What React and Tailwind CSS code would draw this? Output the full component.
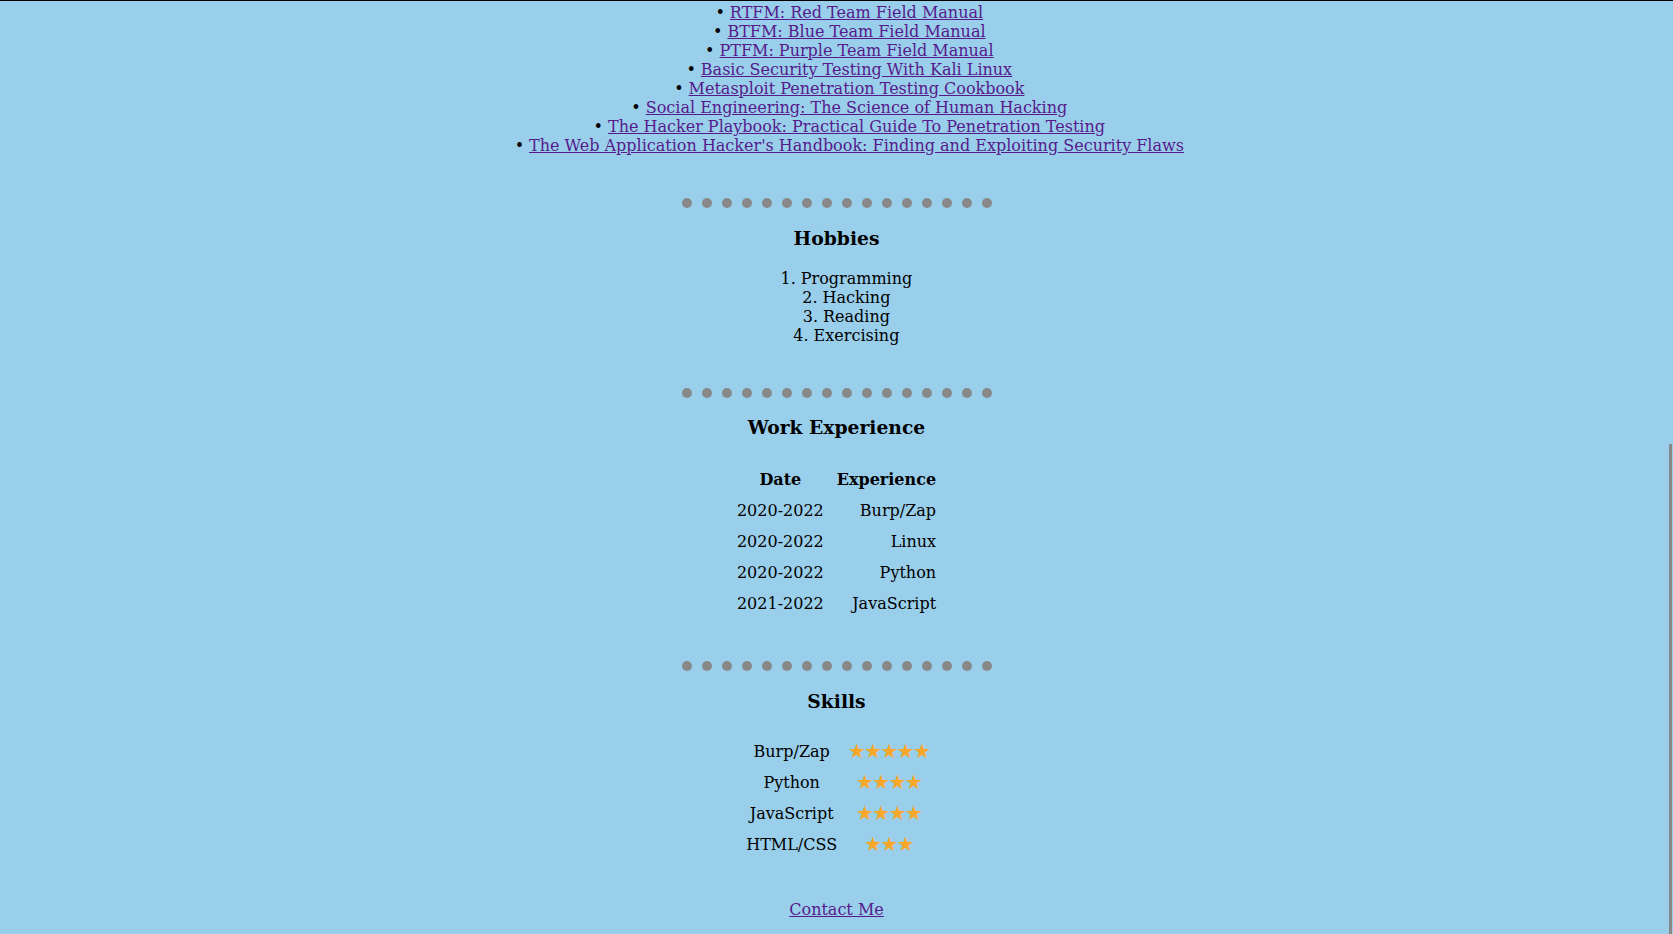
const books = [
  'RTFM: Red Team Field Manual',
  'BTFM: Blue Team Field Manual',
  'PTFM: Purple Team Field Manual',
  'Basic Security Testing With Kali Linux',
  'Metasploit Penetration Testing Cookbook',
  'Social Engineering: The Science of Human Hacking',
  'The Hacker Playbook: Practical Guide To Penetration Testing',
  "The Web Application Hacker's Handbook: Finding and Exploiting Security Flaws",
];

const hobbies = ['Programming', 'Hacking', 'Reading', 'Exercising'];

const work = [
  ['2020-2022', 'Burp/Zap'],
  ['2020-2022', 'Linux'],
  ['2020-2022', 'Python'],
  ['2021-2022', 'JavaScript'],
];

const skills = [
  ['Burp/Zap', 5],
  ['Python', 4],
  ['JavaScript', 4],
  ['HTML/CSS', 3],
];

function Dots({ className = 'mt-[43px]' }) {
  return (
    <div className={`flex justify-center gap-[10px] ${className}`}>
      {Array.from({ length: 16 }).map((_, i) => (
        <span key={i} className="w-[10px] h-[10px] rounded-full bg-[#888888]" />
      ))}
    </div>
  );
}

// marker sits just left of the centred text, like an outside list marker
function Item({ marker, children }) {
  return (
    <li>
      <span className="relative">
        <span className="absolute right-full pr-[5px] whitespace-nowrap">{marker}</span>
        {children}
      </span>
    </li>
  );
}

export default function App() {
  return (
    <div className="relative min-h-[934px] bg-[#9acfeb] text-black text-center text-[16px] leading-[normal] font-['DejaVu_Serif',serif]">
      <div className="h-px bg-black" />

      {/* reading list */}
      <ul className="pl-10 pt-[2px]">
        {books.map((b, i) => (
          <Item key={i} marker="•">
            <a href="#" className="text-[#551a8b] underline">{b}</a>
          </Item>
        ))}
      </ul>

      <Dots />
      <h3 className="mt-[19px] text-[18.72px] font-bold">Hobbies</h3>
      <ol className="pl-10 mt-[20px]">
        {hobbies.map((h, i) => (
          <Item key={i} marker={`${i + 1}.`}>{h}</Item>
        ))}
      </ol>

      <Dots />
      <h3 className="mt-[18px] text-[18.72px] font-bold">Work Experience</h3>
      <table className="mx-auto mt-[26px]">
        <thead>
          <tr>
            <th className="px-[6.5px] py-[6px] text-center">Date</th>
            <th className="px-[6.5px] py-[6px] text-right">Experience</th>
          </tr>
        </thead>
        <tbody>
          {work.map(([d, e], i) => (
            <tr key={i}>
              <td className="px-[6.5px] py-[6px] text-center">{d}</td>
              <td className="px-[6.5px] py-[6px] text-right">{e}</td>
            </tr>
          ))}
        </tbody>
      </table>

      <Dots className="mt-[42px]" />
      <h3 className="mt-[19px] text-[18.72px] font-bold">Skills</h3>
      <table className="mx-auto mt-[24px]">
        <tbody>
          {skills.map(([s, n], i) => (
            <tr key={i}>
              <td className="pl-[9px] pr-[4px] py-[6px] text-center">{s}</td>
              <td className="px-[6.5px] py-[6px] text-center text-[#f7a72a] text-[20px] tracking-[-1.6px] leading-[19px] font-['DejaVu_Sans',sans-serif]">
                {'★'.repeat(n)}
              </td>
            </tr>
          ))}
        </tbody>
      </table>

      <p className="mt-[40px] pb-[15px]">
        <a href="#" className="text-[#551a8b] underline">Contact Me</a>
      </p>

      {/* overlay scrollbar thumb */}
      <div className="absolute right-[1px] top-[444px] w-[3px] h-[490px] bg-[#888888]" />
    </div>
  );
}
